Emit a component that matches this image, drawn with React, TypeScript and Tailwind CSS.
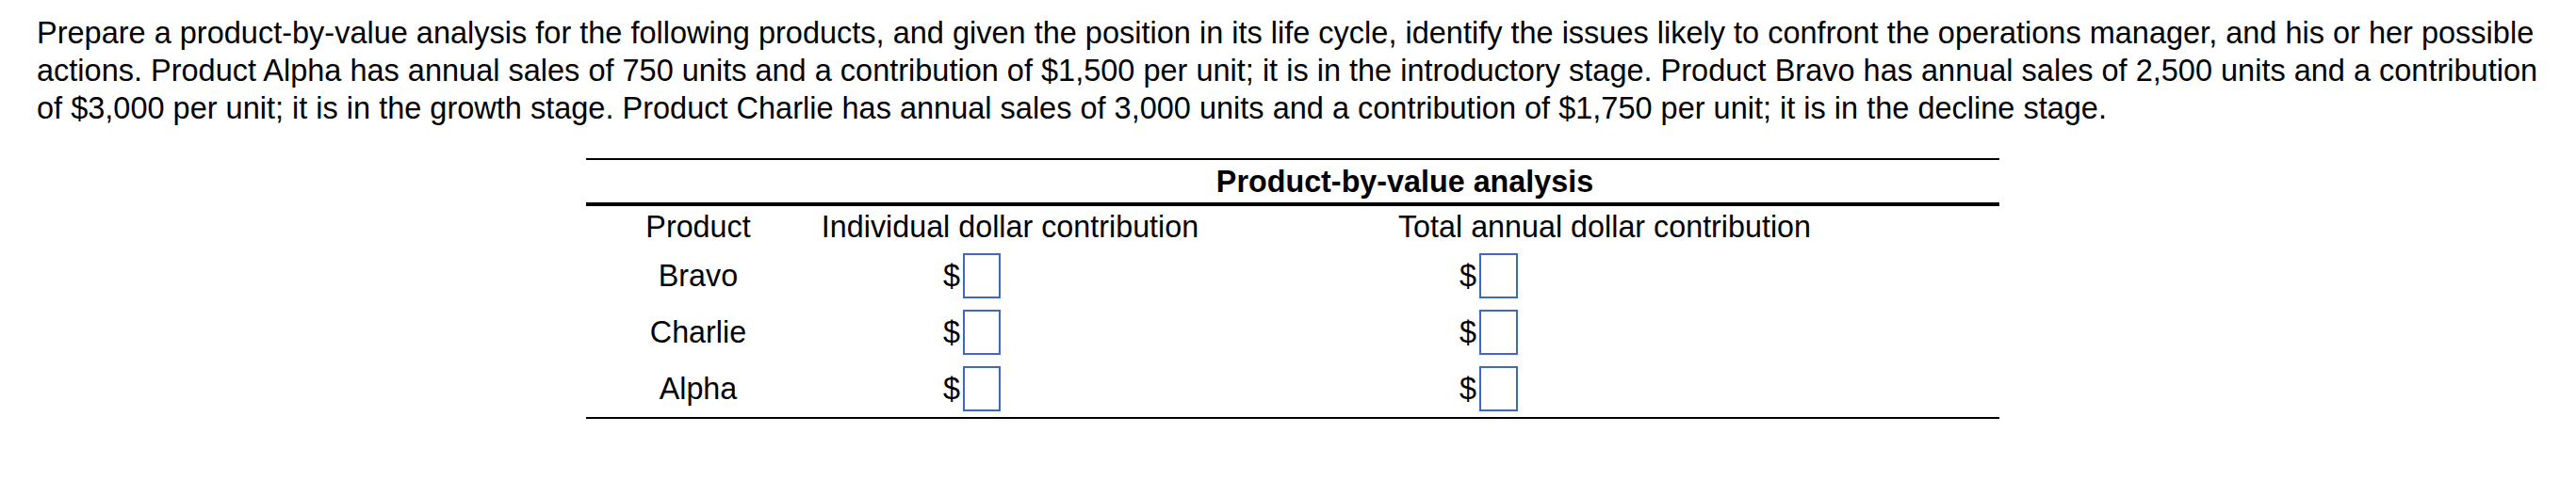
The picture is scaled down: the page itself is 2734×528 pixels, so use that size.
import { useState } from "react";

const products = ["Bravo", "Charlie", "Alpha"];

export default function App() {
  const [values, setValues] = useState<Record<string, string>>({});

  const update = (key: string, v: string) => {
    setValues((prev) => ({ ...prev, [key]: v }));
  };

  return (
    <div className="w-full h-[528px] bg-white text-black font-['Liberation_Sans',Arial,sans-serif] text-[32.3px]">
      <p className="pl-[39px] pr-[40px] pt-[15px] leading-[40px] text-[32.5px]">
        Prepare a product-by-value analysis for the following products, and given the position in its life cycle,
        identify the issues likely to confront the operations manager, and his or her possible actions. Product Alpha
        has annual sales of 750 units and a contribution of $1,500 per unit; it is in the introductory stage. Product
        Bravo has annual sales of 2,500 units and a contribution of $3,000 per unit; it is in the growth stage. Product
        Charlie has annual sales of 3,000 units and a contribution of $1,750 per unit; it is in the decline stage.
      </p>

      <div className="ml-[622px] mt-[33px] w-[1500px]">
        <div className="border-t-2 border-black grid grid-cols-[238px_1262px] h-[47px] items-center">
          <div />
          <div className="text-center font-bold leading-[36px]">Product-by-value analysis</div>
        </div>
        <div className="border-t-4 border-black border-b-2">
          <div className="grid grid-cols-[238px_424px_838px] h-[44px] items-center leading-[36px] text-center">
            <div>Product</div>
            <div>Individual dollar contribution</div>
            <div>Total annual dollar contribution</div>
          </div>

          {products.map((p) => (
            <div key={p} className="grid grid-cols-[238px_424px_838px] h-[60px] items-center leading-[36px]">
              <div className="text-center">{p}</div>
              <div className="flex items-center pl-[141px]">
                <span>$</span>
                <input
                  type="text"
                  value={values[p + "-unit"] || ""}
                  onChange={(e) => update(p + "-unit", e.target.value)}
                  className="ml-[3px] w-[40px] h-[48px] border-2 border-[#3d68c9] outline-none px-1"
                />
              </div>
              <div className="flex items-center pl-[265px]">
                <span>$</span>
                <input
                  type="text"
                  value={values[p + "-total"] || ""}
                  onChange={(e) => update(p + "-total", e.target.value)}
                  className="ml-[3px] w-[41px] h-[48px] border-2 border-[#3d68c9] outline-none px-1"
                />
              </div>
            </div>
          ))}
        </div>
      </div>
    </div>
  );
}
